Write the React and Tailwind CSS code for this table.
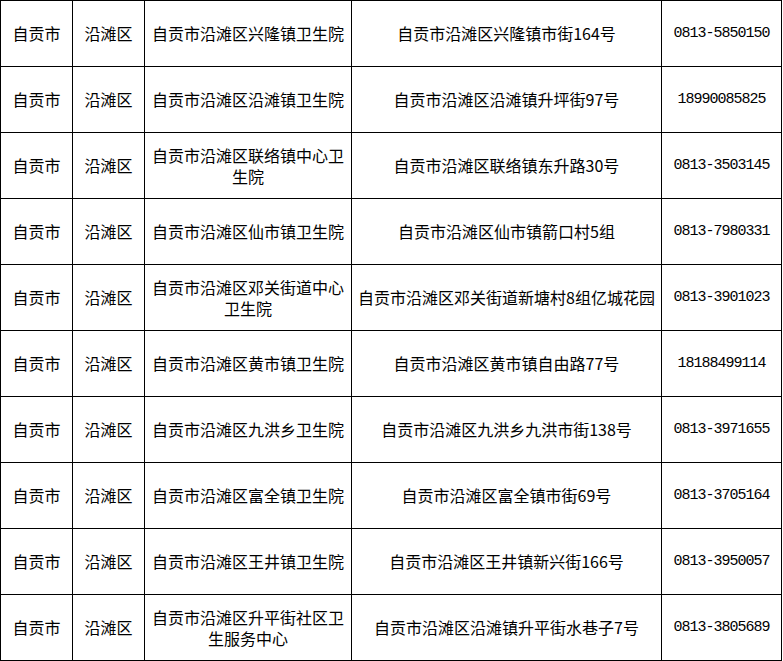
import React from "react";

const ROWS = [
  ["自贡市沿滩区兴隆镇卫生院", "自贡市沿滩区兴隆镇市街164号", "0813-5850150"],
  ["自贡市沿滩区沿滩镇卫生院", "自贡市沿滩区沿滩镇升坪街97号", "18990085825"],
  ["自贡市沿滩区联络镇中心卫生院", "自贡市沿滩区联络镇东升路30号", "0813-3503145"],
  ["自贡市沿滩区仙市镇卫生院", "自贡市沿滩区仙市镇箭口村5组", "0813-7980331"],
  ["自贡市沿滩区邓关街道中心卫生院", "自贡市沿滩区邓关街道新塘村8组亿城花园", "0813-3901023"],
  ["自贡市沿滩区黄市镇卫生院", "自贡市沿滩区黄市镇自由路77号", "18188499114"],
  ["自贡市沿滩区九洪乡卫生院", "自贡市沿滩区九洪乡九洪市街138号", "0813-3971655"],
  ["自贡市沿滩区富全镇卫生院", "自贡市沿滩区富全镇市街69号", "0813-3705164"],
  ["自贡市沿滩区王井镇卫生院", "自贡市沿滩区王井镇新兴街166号", "0813-3950057"],
  ["自贡市沿滩区升平街社区卫生服务中心", "自贡市沿滩区沿滩镇升平街水巷子7号", "0813-3805689"],
];

const cell =
  "border border-black p-0 px-[3px] text-center align-middle h-[66px] leading-[21px]";

export default function App() {
  return (
    <div className="bg-white w-[783px] h-[661px] overflow-hidden">
      <table
        className="border-collapse table-fixed w-[782px] text-[16px] text-black"
        style={{ fontFamily: '"Noto Sans CJK SC", sans-serif' }}
      >
        <colgroup>
          <col className="w-[72px]" />
          <col className="w-[72px]" />
          <col className="w-[207px]" />
          <col className="w-[310px]" />
          <col className="w-[120px]" />
        </colgroup>
        <tbody>
          {ROWS.map(([name, addr, phone]) => (
            <tr key={name}>
              <td className={cell}>自贡市</td>
              <td className={cell}>沿滩区</td>
              <td className={cell}>{name}</td>
              <td className={cell}>{addr}</td>
              <td className={cell + " font-['Liberation_Mono',monospace] text-[15px] tracking-[-1px]"}>
                {phone}
              </td>
            </tr>
          ))}
        </tbody>
      </table>
    </div>
  );
}
